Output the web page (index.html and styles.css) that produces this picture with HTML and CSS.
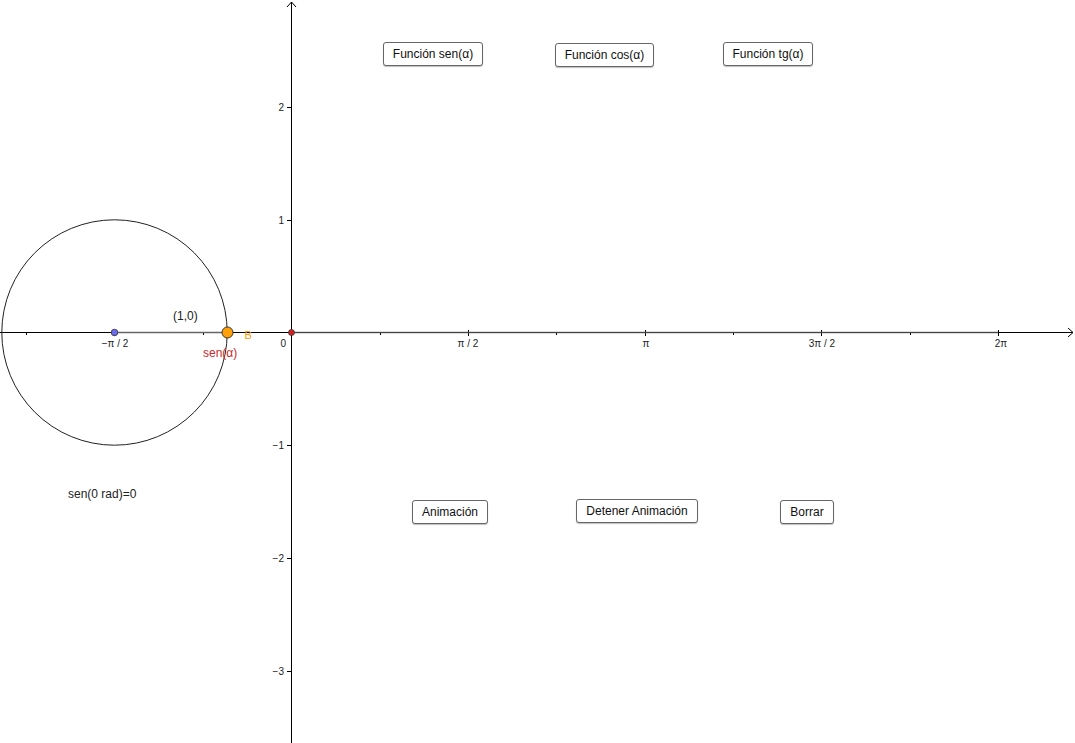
FILE: index.html
```html
<!DOCTYPE html>
<html lang="es">
<head>
<meta charset="utf-8">
<title>Funciones trigonométricas</title>
<link rel="stylesheet" href="styles.css">
</head>
<body>
<div class="canvas">
  <svg class="plot" width="1075" height="743" viewBox="0 0 1075 743" xmlns="http://www.w3.org/2000/svg">
    <!-- x axis -->
    <line x1="0" y1="332.5" x2="1073" y2="332.5" stroke="#000" stroke-width="1"/>
    <polyline points="1068,328 1073,332.5 1068,337" fill="none" stroke="#000" stroke-width="1"/>
    <!-- y axis -->
    <line x1="291.5" y1="2" x2="291.5" y2="743" stroke="#000" stroke-width="1"/>
    <polyline points="287,7 291.5,2 296,7" fill="none" stroke="#000" stroke-width="1"/>
    <!-- x ticks major -->
    <g stroke="#000" stroke-width="1">
      <line x1="114.5" y1="330" x2="114.5" y2="336"/>
      <line x1="468.5" y1="330" x2="468.5" y2="336"/>
      <line x1="645.5" y1="330" x2="645.5" y2="336"/>
      <line x1="821.5" y1="330" x2="821.5" y2="336"/>
      <line x1="998.5" y1="330" x2="998.5" y2="336"/>
      <!-- minor -->
      <line x1="26.5" y1="332" x2="26.5" y2="335"/>
      <line x1="203.5" y1="332" x2="203.5" y2="335"/>
      <line x1="380.5" y1="332" x2="380.5" y2="335"/>
      <line x1="556.5" y1="332" x2="556.5" y2="335"/>
      <line x1="733.5" y1="332" x2="733.5" y2="335"/>
      <line x1="910.5" y1="332" x2="910.5" y2="335"/>
      <!-- y ticks -->
      <line x1="287" y1="107.5" x2="291" y2="107.5"/>
      <line x1="287" y1="220.5" x2="291" y2="220.5"/>
      <line x1="287" y1="445.5" x2="291" y2="445.5"/>
      <line x1="287" y1="558.5" x2="291" y2="558.5"/>
      <line x1="287" y1="671.5" x2="291" y2="671.5"/>
    </g>
    <!-- function graph y = 0 -->
    <line x1="291" y1="332.5" x2="998" y2="332.5" stroke="#555" stroke-width="1.6" opacity="0.8"/>
    <!-- unit circle -->
    <circle cx="114.5" cy="332.5" r="112.7" fill="none" stroke="#222" stroke-width="1"/>
    <!-- radius segment -->
    <line x1="114.5" y1="332.5" x2="227" y2="332.5" stroke="#666" stroke-width="1.6"/>
    <!-- labels -->
    <g class="tick-label">
      <text x="115" y="347" text-anchor="middle">−π / 2</text>
      <text x="286" y="347" text-anchor="end">0</text>
      <text x="468" y="347" text-anchor="middle">π / 2</text>
      <text x="646" y="347" text-anchor="middle">π</text>
      <text x="822" y="347" text-anchor="middle">3π / 2</text>
      <text x="1001" y="347" text-anchor="middle">2π</text>
      <text x="284" y="111" text-anchor="end">2</text>
      <text x="284" y="224" text-anchor="end">1</text>
      <text x="284" y="449" text-anchor="end">−1</text>
      <text x="284" y="562" text-anchor="end">−2</text>
      <text x="284" y="675" text-anchor="end">−3</text>
    </g>
    <text class="label" x="173" y="320">(1,0)</text>
    <text class="label red" x="203" y="357">sen(α)</text>
    <text class="label orange small" x="244.5" y="338.5">B</text>
    <text class="label" x="68" y="498">sen(0 rad)=0</text>
    <!-- points -->
    <circle cx="114.5" cy="332.5" r="3.3" fill="#6b6bef" stroke="#333" stroke-width="0.8"/>
    <circle cx="291.5" cy="332.5" r="3" fill="#d42020" stroke="#333" stroke-width="0.8"/>
    <circle cx="227.5" cy="332.5" r="5.5" fill="#ff9f0a" stroke="#333" stroke-width="1"/>
  </svg>

  <button class="btn b-sen">Función sen(α)</button>
  <button class="btn b-cos">Función cos(α)</button>
  <button class="btn b-tg">Función tg(α)</button>
  <button class="btn b-anim">Animación</button>
  <button class="btn b-stop">Detener Animación</button>
  <button class="btn b-borrar">Borrar</button>
</div>
</body>
</html>
```
FILE: styles.css
```css
html, body {
  margin: 0;
  padding: 0;
  background: #fff;
}
.canvas {
  position: relative;
  width: 1075px;
  height: 743px;
  overflow: hidden;
  font-family: "Liberation Sans", Arial, sans-serif;
}
.plot {
  position: absolute;
  left: 0;
  top: 0;
  display: block;
}
.tick-label text {
  font-family: "Liberation Sans", Arial, sans-serif;
  font-size: 10px;
  fill: #222;
}
.label {
  font-family: "Liberation Sans", Arial, sans-serif;
  font-size: 12px;
  fill: #222;
}
.label.red { fill: #cc2a2a; }
.label.orange { fill: #ff9900; }
.label.small { font-size: 11px; }

.btn {
  position: absolute;
  box-sizing: border-box;
  height: 24px;
  padding: 0 8px;
  margin: 0;
  background: #fff;
  border: 1px solid #666;
  border-radius: 3px;
  box-shadow: 0 1px 1px rgba(0,0,0,0.25);
  font-family: "Liberation Sans", Arial, sans-serif;
  font-size: 12px;
  color: #111;
  line-height: 20px;
  white-space: nowrap;
  cursor: pointer;
}
.b-sen { left: 383px; top: 42px; width: 100px; }
.b-cos { left: 555px; top: 43px; width: 99px; }
.b-tg { left: 723px; top: 42px; width: 90px; }
.b-anim { left: 412px; top: 500px; width: 76px; }
.b-stop { left: 576px; top: 499px; width: 122px; }
.b-borrar { left: 780px; top: 500px; width: 54px; }
```
